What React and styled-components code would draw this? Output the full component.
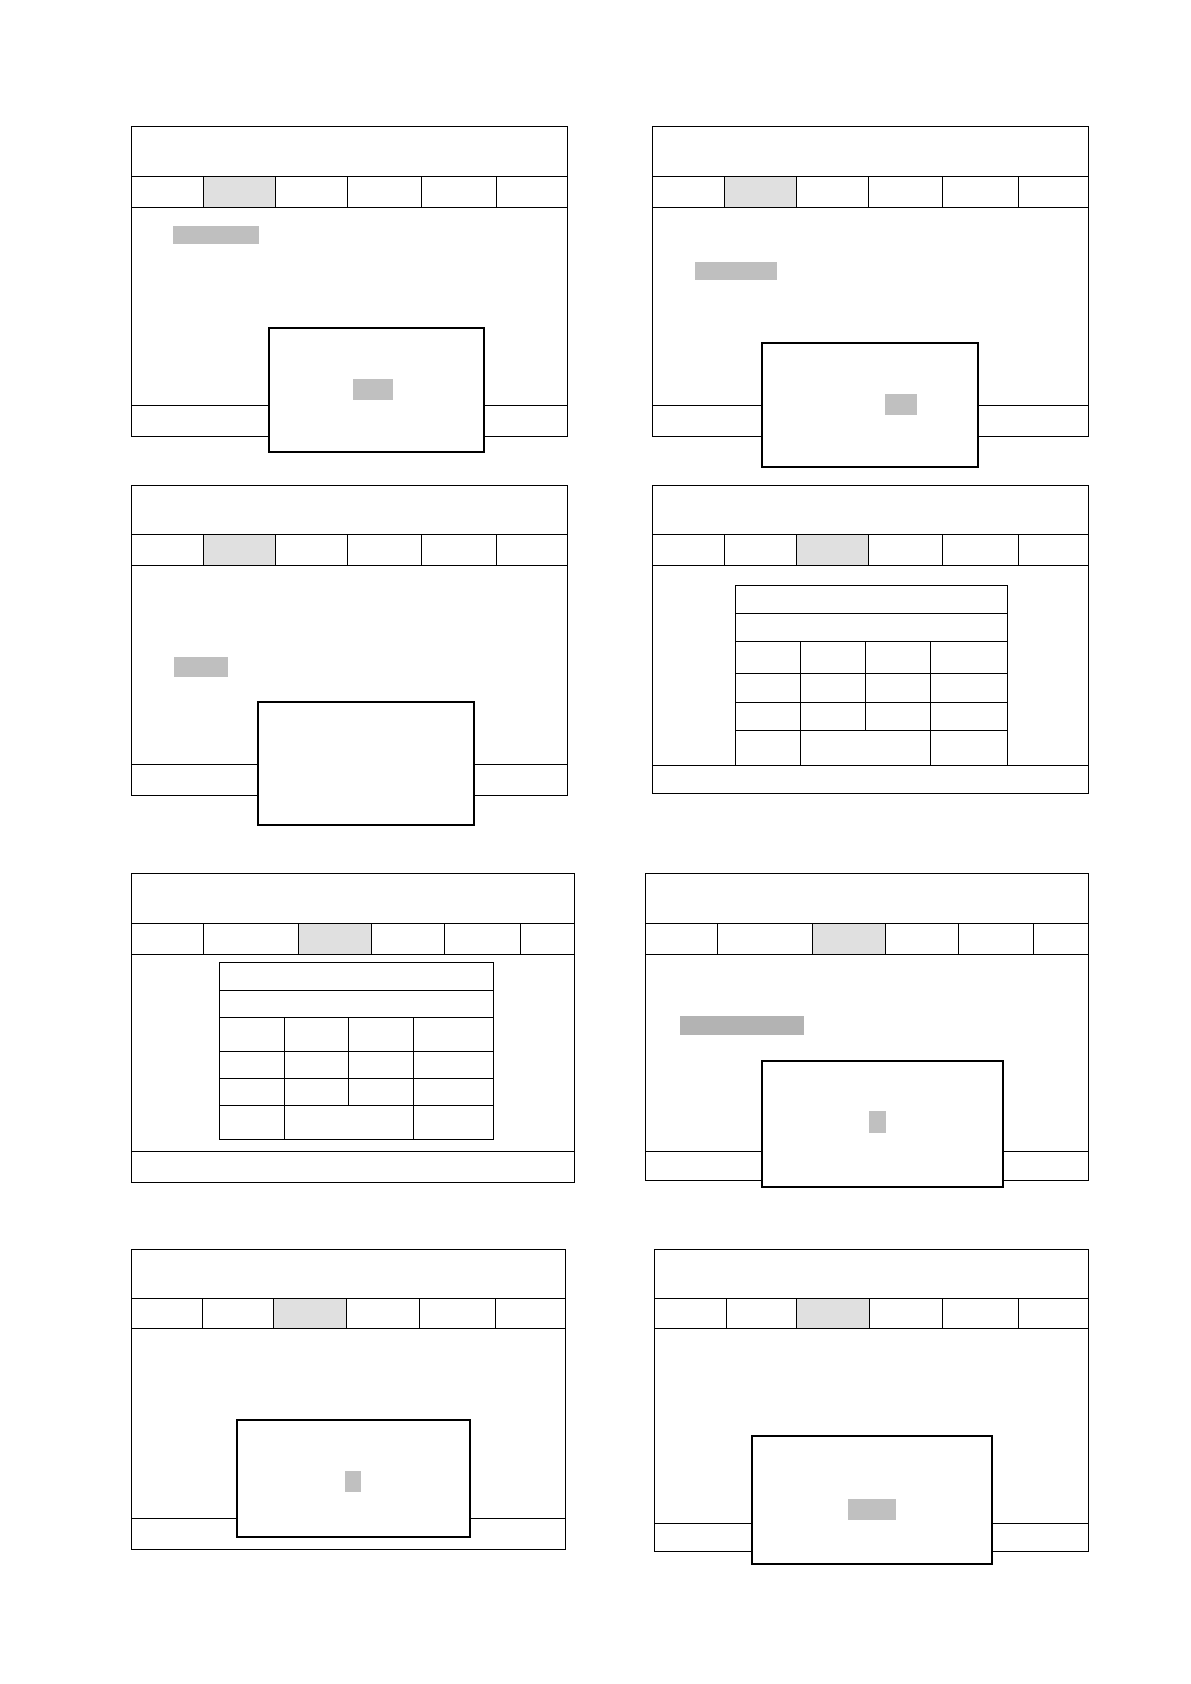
import styled, { createGlobalStyle } from 'styled-components'

const GlobalStyle = createGlobalStyle`
  * { box-sizing: border-box; }
  body {
    margin: 0;
    background: #fff;
    font-family: 'Liberation Sans', Arial, sans-serif;
  }
`

const screens = [
  [
    {
      x: 131, w: 437, h: 311, header: 50, tabs: 31, footer: 31,
      cols: [71, 72, 72, 74, 75], active: 1,
      field: { x: 41, y: 18, w: 86, h: 18 },
      dialog: { x: 136, y: 200, w: 217, h: 126, chip: { x: 83, y: 50, w: 40, h: 21 } }
    },
    {
      x: 652, w: 437, h: 311, header: 50, tabs: 31, footer: 31,
      cols: [71, 72, 72, 74, 76], active: 1,
      field: { x: 42, y: 54, w: 82, h: 18 },
      dialog: { x: 108, y: 215, w: 218, h: 126, chip: { x: 122, y: 50, w: 32, h: 21 } }
    }
  ],
  [
    {
      x: 131, w: 437, h: 311, header: 49, tabs: 31, footer: 31,
      cols: [71, 72, 72, 74, 75], active: 1,
      field: { x: 42, y: 91, w: 54, h: 20 },
      dialog: { x: 125, y: 215, w: 218, h: 125 }
    },
    {
      x: 652, w: 437, h: 309, header: 49, tabs: 31, footer: 28,
      cols: [71, 72, 72, 74, 76], active: 2,
      table: { x: 82, y: 19, cols: [65, 65, 65, 77], rows: [28, 28, 32, 29, 28, 35] }
    }
  ],
  [
    {
      x: 131, w: 444, h: 310, header: 50, tabs: 31, footer: 31,
      cols: [71, 95, 73, 73, 76], active: 2,
      table: { x: 87, y: 7, cols: [65, 64, 65, 80], rows: [28, 27, 34, 27, 27, 34] }
    },
    {
      x: 645, w: 444, h: 308, header: 50, tabs: 31, footer: 29,
      cols: [71, 95, 73, 73, 75], active: 2,
      field: { x: 34, y: 61, w: 124, h: 19, dark: true },
      dialog: { x: 115, y: 186, w: 243, h: 128, chip: { x: 106, y: 49, w: 17, h: 22 } }
    }
  ],
  [
    {
      x: 131, w: 435, h: 301, header: 49, tabs: 30, footer: 31,
      cols: [70, 71, 73, 73, 76], active: 2,
      dialog: { x: 104, y: 169, w: 235, h: 119, chip: { x: 107, y: 50, w: 16, h: 21 } }
    },
    {
      x: 654, w: 435, h: 303, header: 49, tabs: 30, footer: 28,
      cols: [71, 70, 73, 73, 76], active: 2,
      dialog: { x: 96, y: 185, w: 242, h: 130, chip: { x: 95, y: 62, w: 48, h: 21 } }
    }
  ]
]

const rowGaps = [126, 48, 77, 66]

const Page = styled.div`
  width: 1191px;
  min-height: 1684px;
  display: flex;
  flex-direction: column;
  background: #fff;
`

const Row = styled.div`
  display: flex;
  align-items: flex-start;
  margin-top: ${p => p.$gap}px;
`

const Screen = styled.div`
  position: relative;
  display: flex;
  flex-direction: column;
  flex: none;
  width: ${p => p.$w}px;
  height: ${p => p.$h}px;
  margin-left: ${p => p.$offset}px;
  border: 1.5px solid #000;
  background: #fff;
`

const Header = styled.div`
  flex: none;
  height: ${p => p.$h}px;
  border-bottom: 1.5px solid #000;
`

const TabBar = styled.div`
  flex: none;
  display: grid;
  grid-template-columns: ${p => p.$cols};
  height: ${p => p.$h}px;
  border-bottom: 1.5px solid #000;
`

const Tab = styled.div`
  background: ${p => (p.$active ? '#e0e0e0' : '#fff')};
  & + & {
    border-left: 1.5px solid #000;
  }
`

const Content = styled.div`
  flex: 1;
  min-height: 0;
  padding-top: 0.02px;
`

const Footer = styled.div`
  flex: none;
  height: ${p => p.$h}px;
  border-top: 1.5px solid #000;
`

const Field = styled.div`
  width: ${p => p.$w}px;
  height: ${p => p.$h}px;
  margin-left: ${p => p.$x}px;
  margin-top: ${p => p.$y}px;
  background: ${p => (p.$dark ? '#b3b3b3' : '#bfbfbf')};
`

const Grid = styled.table`
  position: relative;
  z-index: 1;
  border-collapse: collapse;
  table-layout: fixed;
  margin-left: ${p => p.$x}px;
  margin-top: ${p => p.$y}px;
  background: #fff;
`

const GridRow = styled.tr`
  height: ${p => p.$h}px;
`

const Cell = styled.td`
  border: 1.5px solid #000;
  padding: 0;
`

const Dialog = styled.div`
  position: absolute;
  z-index: 2;
  left: ${p => p.$x}px;
  top: ${p => p.$y}px;
  width: ${p => p.$w}px;
  height: ${p => p.$h}px;
  border: 2.5px solid #000;
  background: #fff;
  padding-top: 0.02px;
`

const Chip = styled.div`
  width: ${p => p.$w}px;
  height: ${p => p.$h}px;
  margin-left: ${p => p.$x}px;
  margin-top: ${p => p.$y}px;
  background: #c0c0c0;
`

const DataTable = ({ table }) => {
  const [c1, c2, c3, c4] = table.cols
  return (
    <Grid $x={table.x} $y={table.y}>
      <colgroup>
        {table.cols.map((w, i) => <col key={i} style={{ width: w }} />)}
      </colgroup>
      <tbody>
        {table.rows.map((h, i) => (
          <GridRow key={i} $h={h}>
            {i < 2 && <Cell colSpan={4} />}
            {i >= 2 && i < 5 && [c1, c2, c3, c4].map((_, j) => <Cell key={j} />)}
            {i === 5 && (
              <>
                <Cell />
                <Cell colSpan={2} />
                <Cell />
              </>
            )}
          </GridRow>
        ))}
      </tbody>
    </Grid>
  )
}

const Mockup = ({ s, offset }) => (
  <Screen $w={s.w} $h={s.h} $offset={offset}>
    <Header $h={s.header} />
    <TabBar $h={s.tabs} $cols={s.cols.map(c => `${c}px`).join(' ') + ' 1fr'}>
      {[0, 1, 2, 3, 4, 5].map(i => <Tab key={i} $active={i === s.active} />)}
    </TabBar>
    <Content>
      {s.field && <Field $x={s.field.x} $y={s.field.y} $w={s.field.w} $h={s.field.h} $dark={s.field.dark} />}
      {s.table && <DataTable table={s.table} />}
    </Content>
    <Footer $h={s.footer} />
    {s.dialog && (
      <Dialog $x={s.dialog.x} $y={s.dialog.y} $w={s.dialog.w} $h={s.dialog.h}>
        {s.dialog.chip && (
          <Chip $x={s.dialog.chip.x} $y={s.dialog.chip.y} $w={s.dialog.chip.w} $h={s.dialog.chip.h} />
        )}
      </Dialog>
    )}
  </Screen>
)

export default function App() {
  return (
    <>
      <GlobalStyle />
      <Page>
        {screens.map((row, r) => (
          <Row key={r} $gap={rowGaps[r]}>
            {row.map((s, i) => (
              <Mockup
                key={i}
                s={s}
                offset={i === 0 ? s.x : s.x - (row[0].x + row[0].w)}
              />
            ))}
          </Row>
        ))}
      </Page>
    </>
  )
}
